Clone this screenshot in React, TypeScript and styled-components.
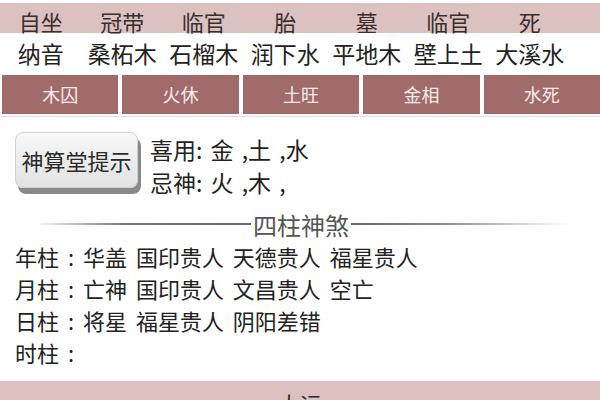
import React from "react";
import styled, { createGlobalStyle } from "styled-components";

const GlobalStyle = createGlobalStyle`
  html, body {
    margin: 0;
    padding: 0;
    background: #fff;
  }
  body {
    font-family: "Noto Sans CJK SC", "Noto Sans", sans-serif;
    color: #222;
  }
`;

const Page = styled.div`
  width: 600px;
  height: 400px;
  overflow: hidden;
`;

const InfoRow = styled.div<{ $band?: boolean }>`
  display: grid;
  grid-template-columns: repeat(7, 81.5px);
  box-sizing: border-box;
  margin-top: ${(p) => (p.$band ? "3px" : "0")};
  padding-top: ${(p) => (p.$band ? "3px" : "1px")};
  height: ${(p) => (p.$band ? "30px" : "40px")};
  line-height: ${(p) => (p.$band ? "30px" : "38px")};
  background: ${(p) => (p.$band ? "#dcc1c1" : "#fff")};
  color: ${(p) => (p.$band ? "#3a2e2e" : "#222")};
  font-size: ${(p) => (p.$band ? "22px" : "23px")};
`;

const InfoCell = styled.div`
  text-align: center;
  white-space: nowrap;
`;

const ElementBar = styled.div`
  display: grid;
  grid-template-columns: repeat(5, 1fr);
  gap: 4px;
  padding: 0 0 2px 2px;
  margin-top: 2px;
  border-bottom: 1px solid #ecd6d6;
`;

const ElementButton = styled.div`
  height: 39px;
  line-height: 39px;
  background: #a26b6b;
  color: #f7eded;
  font-size: 18px;
  text-align: center;
`;

const HintSection = styled.div`
  display: flex;
  align-items: flex-start;
  gap: 12px;
  padding-left: 15px;
  margin-top: 15px;
`;

const HintButton = styled.div`
  width: 123px;
  height: 56px;
  box-sizing: border-box;
  border: 1px solid #d2d2d2;
  border-radius: 8px;
  background: linear-gradient(#f8f8f8, #e2e2e2);
  box-shadow: 3px 6px 0 #8a8a8a;
  display: flex;
  align-items: center;
  justify-content: center;
  font-size: 22px;
  color: #2a2a2a;
`;

const HintText = styled.div`
  margin-top: 1px;
  font-size: 23px;
  line-height: 33px;
  word-spacing: 3px;
  color: #222;
  white-space: pre;
`;

const Divider = styled.div`
  display: flex;
  align-items: center;
  height: 30px;
  margin-top: 10px;
  padding: 0 30px 0 40px;
  gap: 2px;
  font-size: 24px;
  color: #555;
`;

const DividerLine = styled.div<{ $side: "left" | "right" }>`
  flex: ${(p) => (p.$side === "left" ? "0 0 211px" : "1")};
  height: 2px;
  background: ${(p) =>
    p.$side === "left"
      ? "linear-gradient(to right, rgba(120,120,120,0.1), #777 40%, #666)"
      : "linear-gradient(to right, #666, #888 40%, rgba(150,150,150,0))"};
`;

const ShaList = styled.div`
  margin-top: 1px;
  padding-left: 15px;
  font-size: 22px;
  line-height: 32px;
  word-spacing: 4px;
  color: #222;
`;

const ShaRow = styled.div`
  white-space: pre;
`;

const BottomBar = styled.div`
  margin-top: 13px;
  height: 40px;
  line-height: 44px;
  background: #dcc1c0;
  text-align: center;
  font-size: 22px;
  color: #2a2a2a;
`;

const phases = ["自坐", "冠带", "临官", "胎", "墓", "临官", "死"];
const nayin = ["纳音", "桑柘木", "石榴木", "润下水", "平地木", "壁上土", "大溪水"];
const elements = ["木囚", "火休", "土旺", "金相", "水死"];
const shaRows = [
  "年柱 : 华盖 国印贵人 天德贵人 福星贵人",
  "月柱 : 亡神 国印贵人 文昌贵人 空亡",
  "日柱 : 将星 福星贵人 阴阳差错",
  "时柱 : ",
];

const App: React.FC = () => {
  return (
    <>
      <GlobalStyle />
      <Page>
        <InfoRow $band>
          {phases.map((t, i) => (
            <InfoCell key={i}>{t}</InfoCell>
          ))}
        </InfoRow>
        <InfoRow>
          {nayin.map((t, i) => (
            <InfoCell key={i}>{t}</InfoCell>
          ))}
        </InfoRow>
        <ElementBar>
          {elements.map((t) => (
            <ElementButton key={t}>{t}</ElementButton>
          ))}
        </ElementBar>
        <HintSection>
          <HintButton>神算堂提示</HintButton>
          <HintText>
            {"喜用: 金 ,土 ,水"}
            <br />
            {"忌神: 火 ,木 ,"}
          </HintText>
        </HintSection>
        <Divider>
          <DividerLine $side="left" />
          <span>四柱神煞</span>
          <DividerLine $side="right" />
        </Divider>
        <ShaList>
          {shaRows.map((r) => (
            <ShaRow key={r}>{r}</ShaRow>
          ))}
        </ShaList>
        <BottomBar>大运</BottomBar>
      </Page>
    </>
  );
};

export default App;
